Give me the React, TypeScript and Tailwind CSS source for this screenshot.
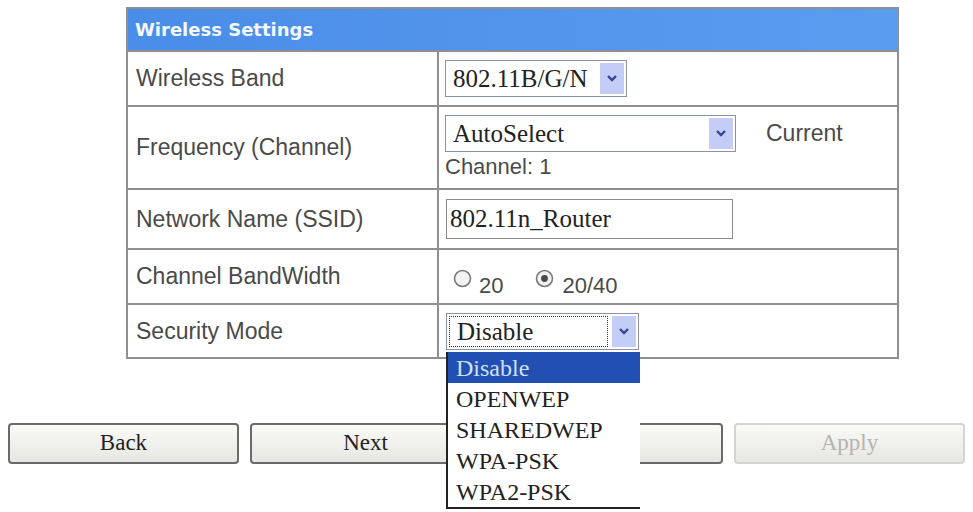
import React from 'react';

const sans = { fontFamily: '"Liberation Sans", Arial, sans-serif' };
const serif = { fontFamily: '"Liberation Serif", "Times New Roman", serif' };

function Chevron() {
  return (
    <svg width="12" height="9" viewBox="0 0 12 9">
      <path d="M2 2 L6 6 L10 2" fill="none" stroke="#33449a" strokeWidth="2.4" />
    </svg>
  );
}

function Select({ value, width, dotted }: { value: string; width: string; dotted?: boolean }) {
  return (
    <div className={`flex h-[37px] border border-[#8a93a6] bg-white ${width}`}>
      <div
        className={`flex flex-1 items-center pl-[7px] text-[25px] leading-none text-[#222] ${
          dotted ? 'm-[2px] border border-dotted border-[#333]' : ''
        }`}
        style={serif}
      >
        {value}
      </div>
      <div className="m-[2px] flex w-[24px] items-center justify-center bg-[#c4cdf6]">
        <Chevron />
      </div>
    </div>
  );
}

function Radio({ checked }: { checked?: boolean }) {
  return (
    <svg width="19" height="19" viewBox="0 0 19 19">
      <circle cx="9.5" cy="9.5" r="8" fill="#f2f2f2" stroke="#7a7a7a" strokeWidth="1.6" />
      {checked && <circle cx="9.5" cy="9.5" r="3.4" fill="#4a4a4a" />}
    </svg>
  );
}

function Label({ children }: { children: React.ReactNode }) {
  return (
    <div className="flex items-center bg-white pl-[8px] text-[23px] text-[#4a4a4a]" style={sans}>
      {children}
    </div>
  );
}

export default function App() {
  const buttons = [
    { label: 'Back', disabled: false },
    { label: 'Next', disabled: false },
    { label: 'Cancel', disabled: false },
    { label: 'Apply', disabled: true },
  ];

  return (
    <div className="relative h-[512px] w-[973px] overflow-hidden bg-white">
      {/* Settings table */}
      <div className="ml-[126px] mt-[7px] grid w-[773px] grid-cols-[309px_1fr] gap-[2px] bg-[#8f8f8f] p-[2px]">
        <div
          className="col-span-2 flex h-[41px] items-center bg-gradient-to-r from-[#4a8de8] to-[#5a9cf0] pl-[7px] text-[18px] font-bold text-[#f4f8ff]"
          style={{ fontFamily: '"DejaVu Sans", Verdana, sans-serif' }}
        >
          Wireless Settings
        </div>

        <div className="contents">
          <div className="h-[53px] contents" />
        </div>

        <Label>Wireless Band</Label>
        <div className="flex h-[53px] items-center bg-white pl-[6px]">
          <Select value="802.11B/G/N" width="w-[182px]" />
        </div>

        <Label>Frequency (Channel)</Label>
        <div className="flex h-[81px] flex-col bg-white pl-[6px] pt-[8px]">
          <div className="flex items-center">
            <Select value="AutoSelect" width="w-[291px]" />
            <span className="ml-[30px] text-[23px] text-[#4a4a4a]" style={sans}>
              Current
            </span>
          </div>
          <div className="mt-[2px] text-[22px] leading-[26px] text-[#4a4a4a]" style={sans}>
            Channel: 1
          </div>
        </div>

        <Label>Network Name (SSID)</Label>
        <div className="flex h-[58px] items-center bg-white pl-[7px]">
          <div
            className="flex h-[40px] w-[287px] items-center border border-[#8a8a8a] pl-[3px] text-[25px] text-[#222]"
            style={serif}
          >
            802.11n_Router
          </div>
        </div>

        <Label>Channel BandWidth</Label>
        <div className="flex h-[53px] items-center bg-white pl-[14px] pt-[4px] text-[22px] text-[#4a4a4a]" style={sans}>
          <Radio />
          <span className="ml-[7px] mt-[14px] leading-none">20</span>
          <span className="ml-[32px]">
            <Radio checked />
          </span>
          <span className="ml-[8px] mt-[14px] leading-none">20/40</span>
        </div>

        <Label>Security Mode</Label>
        <div className="flex h-[52px] items-center bg-white pl-[7px] pt-[1px]">
          <Select value="Disable" width="w-[193px]" dotted />
        </div>
      </div>

      {/* Buttons */}
      <div className="ml-[8px] mt-[64px] flex gap-[11px]">
        {buttons.map((b) => (
          <button
            key={b.label}
            disabled={b.disabled}
            className={`flex h-[41px] w-[231px] items-center justify-center rounded-[4px] border-2 bg-gradient-to-b from-[#fafaf6] to-[#e6e6e2] text-[23px] ${
              b.disabled ? 'border-[#d4d4d0] text-[#b4b4b0]' : 'border-[#6a6a6a] text-[#222]'
            }`}
            style={serif}
          >
            {b.label}
          </button>
        ))}
      </div>

      {/* Open dropdown list */}
      <div
        className="absolute left-[446px] top-[352px] w-[194px] border-b-2 border-l-2 border-[#222] bg-white text-[24px] text-[#222]"
        style={serif}
      >
        <div className="flex h-[31px] items-center bg-[#2150b2] pl-[8px] text-[#cfe0ff]">Disable</div>
        {['OPENWEP', 'SHAREDWEP', 'WPA-PSK', 'WPA2-PSK'].map((o) => (
          <div key={o} className="flex h-[31px] items-center pl-[8px]">
            {o}
          </div>
        ))}
      </div>
    </div>
  );
}
